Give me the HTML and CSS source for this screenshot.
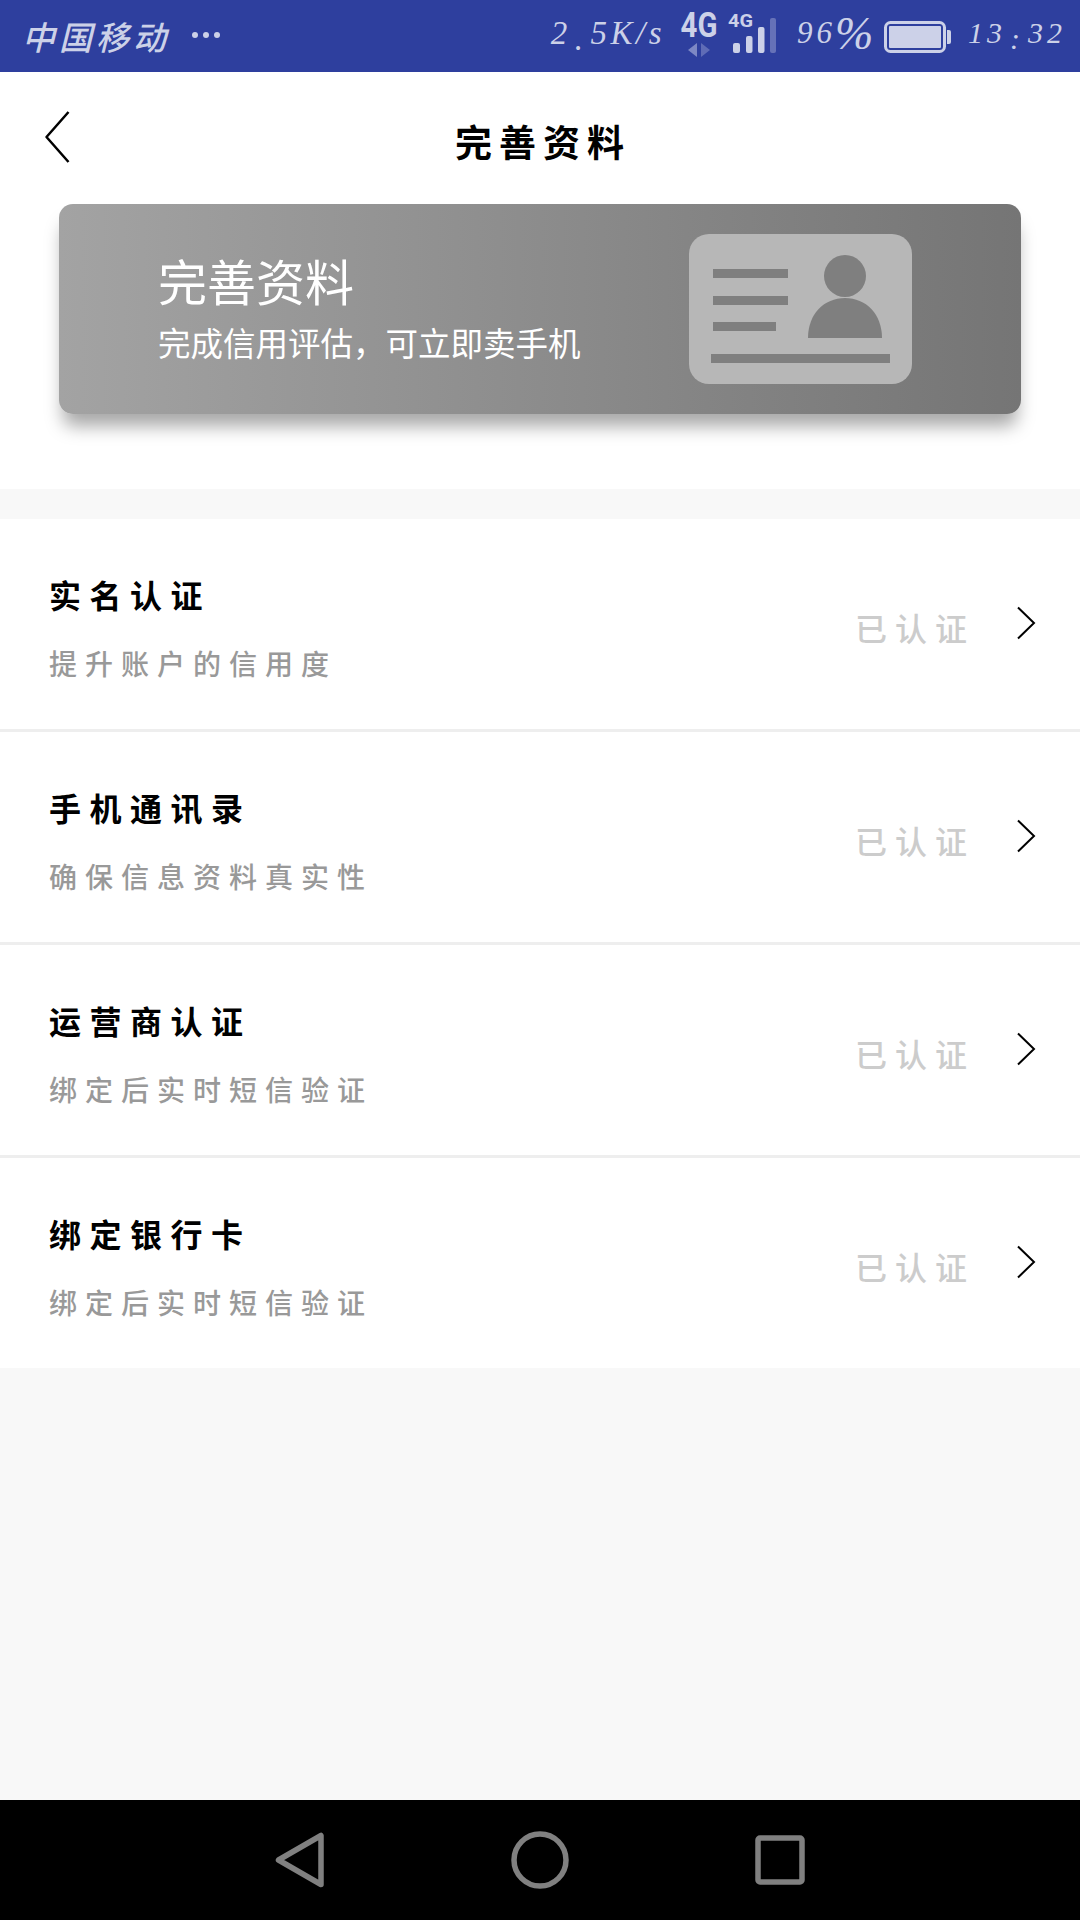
FILE: index.html
```html
<!DOCTYPE html>
<html lang="zh-CN">
<head>
    <meta charset="UTF-8">
    <meta name="viewport" content="width=device-width, initial-scale=1.0">
    <title>完善资料</title>
    <link rel="stylesheet" href="styles.css">
</head>
<body>
    <div class="status-bar">
        <div class="status-left">
            <span class="carrier">中国移动</span>
            <span class="dots"><i></i><i></i><i></i></span>
        </div>
        <div class="status-right">
            <span class="speed">2<span class="low">.</span>5K/s</span>
            <div class="net-main">
                <span class="net-label">4G</span>
                <svg class="net-arrows" width="24" height="14" viewBox="0 0 24 14">
                    <path d="M10 0v14L1 7z" fill="#7d88c4"/>
                    <path d="M14 0v14l9-7z" fill="#5f6cb6"/>
                </svg>
            </div>
            <svg class="signal" width="48" height="46" viewBox="0 0 48 46">
                <text x="0" y="20" class="signal-label" textLength="25" lengthAdjust="spacingAndGlyphs">4G</text>
                <rect x="5" y="36" width="7" height="10" rx="2" fill="#ccd1e8"/>
                <rect x="18" y="29" width="6.500" height="17" rx="2" fill="#ccd1e8"/>
                <rect x="30" y="20" width="6.500" height="26" rx="2" fill="#ccd1e8"/>
                <rect x="42" y="11" width="6" height="35" rx="2" fill="#6672b8"/>
            </svg>
            <span class="percent">96<span class="percent-sign">%</span></span>
            <svg class="battery" width="67" height="32" viewBox="0 0 67 32">
                <rect x="1.500" y="1.500" width="59" height="29" rx="5" fill="none" stroke="#ccd1e8" stroke-width="3"/>
                <rect x="5" y="5" width="52" height="22" rx="1" fill="#ccd1e8"/>
                <path d="M63 9h2a2 2 0 0 1 2 2v10a2 2 0 0 1-2 2h-2z" fill="#ccd1e8"/>
            </svg>
            <span class="clock">13<span class="low">:</span>32</span>
        </div>
    </div>

    <div class="header">
        <svg class="back" width="26" height="54" viewBox="0 0 26 54">
            <path d="M24.500 2 2.500 27l22 25" fill="none" stroke="#000" stroke-width="2.500" stroke-linejoin="round"/>
        </svg>
        <h1>完善资料</h1>
    </div>

    <div class="banner-wrap">
        <div class="banner">
            <div class="banner-text">
                <div class="banner-title">完善资料</div>
                <div class="banner-sub">完成信用评估，可立即卖手机</div>
            </div>
            <svg class="id-card" width="223" height="150" viewBox="0 0 223 150">
                <rect width="223" height="150" rx="20" fill="#b7b7b7"/>
                <g fill="#7f7f7f">
                    <rect x="24" y="35" width="75" height="9"/>
                    <rect x="24" y="62" width="75" height="9"/>
                    <rect x="24" y="88" width="63" height="9"/>
                    <rect x="22" y="120" width="179" height="9"/>
                    <circle cx="156" cy="42" r="21"/>
                    <path d="M119 104c0-24 16-40 37-40s37 16 37 40z"/>
                </g>
            </svg>
        </div>
    </div>

    <div class="list">
        <div class="row">
            <div class="row-text">
                <div class="row-title">实名认证</div>
                <div class="row-sub">提升账户的信用度</div>
            </div>
            <span class="row-state">已认证</span>
            <svg class="chevron" width="20" height="34" viewBox="0 0 20 34">
                <path d="M2 1.500 18 17 2 32.500" fill="none" stroke="#000" stroke-width="2"/>
            </svg>
        </div>
        <div class="row">
            <div class="row-text">
                <div class="row-title">手机通讯录</div>
                <div class="row-sub">确保信息资料真实性</div>
            </div>
            <span class="row-state">已认证</span>
            <svg class="chevron" width="20" height="34" viewBox="0 0 20 34">
                <path d="M2 1.500 18 17 2 32.500" fill="none" stroke="#000" stroke-width="2"/>
            </svg>
        </div>
        <div class="row">
            <div class="row-text">
                <div class="row-title">运营商认证</div>
                <div class="row-sub">绑定后实时短信验证</div>
            </div>
            <span class="row-state">已认证</span>
            <svg class="chevron" width="20" height="34" viewBox="0 0 20 34">
                <path d="M2 1.500 18 17 2 32.500" fill="none" stroke="#000" stroke-width="2"/>
            </svg>
        </div>
        <div class="row">
            <div class="row-text">
                <div class="row-title">绑定银行卡</div>
                <div class="row-sub">绑定后实时短信验证</div>
            </div>
            <span class="row-state">已认证</span>
            <svg class="chevron" width="20" height="34" viewBox="0 0 20 34">
                <path d="M2 1.500 18 17 2 32.500" fill="none" stroke="#000" stroke-width="2"/>
            </svg>
        </div>
    </div>

    <div class="spacer"></div>

    <div class="nav-bar">
        <svg width="50" height="56" viewBox="0 0 50 56">
            <path d="M46 3.500v49L3.500 28z" fill="none" stroke="#808080" stroke-width="5.500" stroke-linejoin="round"/>
        </svg>
        <svg width="58" height="58" viewBox="0 0 58 58">
            <circle cx="29" cy="29" r="26" fill="none" stroke="#808080" stroke-width="5.500"/>
        </svg>
        <svg width="50" height="50" viewBox="0 0 50 50">
            <rect x="3" y="3" width="44" height="44" rx="2" fill="none" stroke="#808080" stroke-width="5.500"/>
        </svg>
    </div>
</body>
</html>
```

FILE: styles.css
```css
body {
    margin: 0;
    width: 1080px;
    height: 1920px;
    display: flex;
    flex-direction: column;
    background: #f8f8f8;
    font-family: "Noto Sans CJK SC", "Noto Sans", sans-serif;
    overflow: hidden;
}

svg {
    display: block;
    flex-shrink: 0;
}

/* status bar */
.status-bar {
    height: 72px;
    background: #2e3f9e;
    color: #ccd1e8;
    display: flex;
    justify-content: space-between;
    align-items: center;
    padding: 0 20px 0 22px;
    flex-shrink: 0;
}

.status-left,
.status-right {
    display: flex;
    align-items: center;
}

.carrier {
    font-size: 33px;
    font-weight: 500;
    letter-spacing: 4px;
    font-style: italic;
}

.dots {
    display: flex;
    gap: 5px;
    margin-left: 22px;
    margin-bottom: 2px;
}

.dots i {
    width: 6px;
    height: 6px;
    border-radius: 50%;
    background: #ccd1e8;
}

.speed,
.percent,
.clock {
    font-family: "Liberation Serif", serif;
    font-style: italic;
    white-space: nowrap;
}

.low {
    vertical-align: -6px;
    margin: 0 4px;
}

.speed {
    font-size: 33px;
    letter-spacing: 3.500px;
    margin-right: 15px;
}

.net-main {
    width: 37px;
    height: 44px;
    display: flex;
    flex-direction: column;
    align-items: center;
    margin-right: 11px;
    margin-bottom: 2px;
}

.net-label {
    font-family: Roboto, "Liberation Sans", sans-serif;
    font-weight: 700;
    font-size: 35px;
    line-height: 25px;
    transform: scaleX(0.84);
}

.net-arrows {
    margin-top: 5px;
}

.signal {
    margin-right: 21px;
    margin-bottom: 12px;
}

.signal-label {
    font-family: Roboto, "Liberation Sans", sans-serif;
    font-weight: 700;
    font-size: 19px;
    fill: #ccd1e8;
}

.percent {
    width: 73px;
    font-size: 31px;
    letter-spacing: 4px;
    margin-right: 14px;
    margin-bottom: 6px;
}

.percent-sign {
    font-size: 46px;
    letter-spacing: 0;
    margin-left: -1px;
    vertical-align: -6px;
}

.battery {
    margin-top: 2px;
}

.clock {
    width: 92px;
    font-size: 30px;
    letter-spacing: 4px;
    margin-left: 17px;
}

/* header */
.header {
    height: 132px;
    background: #fff;
    display: grid;
    grid-template-columns: 1fr auto 1fr;
    align-items: center;
    padding-left: 44px;
    padding-right: 44px;
    flex-shrink: 0;
}

.back {
    margin-bottom: 2px;
}

.header h1 {
    margin: 0;
    padding-top: 5px;
    padding-left: 6px;
    font-size: 37px;
    font-weight: 700;
    letter-spacing: 7px;
    color: #000;
}

/* banner */
.banner-wrap {
    background: #fff;
    padding: 0 59px 75px;
    flex-shrink: 0;
}

.banner {
    height: 210px;
    box-sizing: border-box;
    border-radius: 14px;
    background: linear-gradient(to right, #a3a3a3, #757575);
    box-shadow: 0 16px 18px -4px rgba(0, 0, 0, 0.35);
    display: flex;
    justify-content: space-between;
    align-items: center;
    padding: 0 109px 0 99px;
}

.banner-text {
    padding-bottom: 4px;
}

.banner-title {
    color: #fff;
    font-size: 49px;
    font-weight: 400;
    line-height: 60px;
}

.banner-sub {
    color: #fff;
    font-size: 32.500px;
    font-weight: 400;
    line-height: 44px;
    margin-top: 10px;
}

/* list */
.list {
    margin-top: 30px;
    background: #fff;
    flex-shrink: 0;
}

.row {
    height: 210px;
    border-bottom: 3px solid #eee;
    display: flex;
    align-items: center;
    padding: 0 44px 0 49px;
}

.row:last-child {
    border-bottom: none;
}

.row-text {
    flex: 1;
    padding-top: 7px;
}

.row-title {
    font-size: 32px;
    font-weight: 700;
    letter-spacing: 8.500px;
    line-height: 44px;
    color: #000;
}

.row-sub {
    font-size: 28px;
    font-weight: 500;
    letter-spacing: 8px;
    line-height: 40px;
    margin-top: 27px;
    color: #999;
}

.row-state {
    font-size: 32px;
    font-weight: 500;
    letter-spacing: 8px;
    color: #ccc;
    margin-right: 41px;
    margin-top: 5px;
}

.chevron {
    margin-bottom: 2px;
}

.spacer {
    flex: 1;
}

/* nav bar */
.nav-bar {
    height: 120px;
    background: #000;
    display: flex;
    justify-content: center;
    align-items: center;
    gap: 186px;
    flex-shrink: 0;
}
```
